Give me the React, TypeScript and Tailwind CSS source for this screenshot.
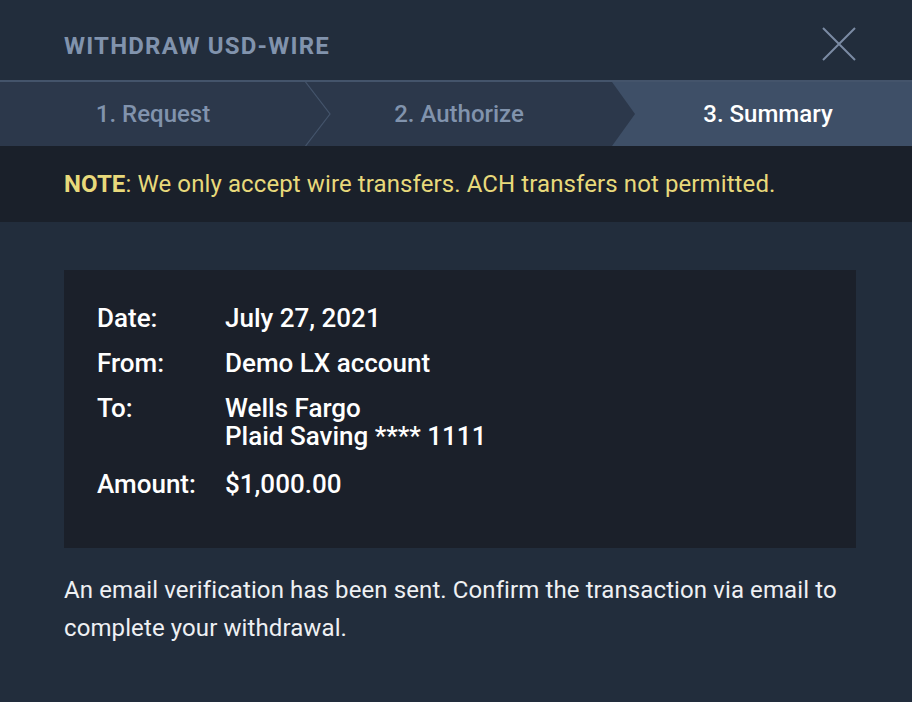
import React from "react";

const steps = [
  { label: "1. Request", state: "done" },
  { label: "2. Authorize", state: "done" },
  { label: "3. Summary", state: "active" },
];

const rows = [
  { label: "Date:", value: ["July 27, 2021"] },
  { label: "From:", value: ["Demo LX account"] },
  { label: "To:", value: ["Wells Fargo", "Plaid Saving **** 1111"] },
  { label: "Amount:", value: ["$1,000.00"] },
];

const App = () => {
  return (
    <div
      className="w-[912px] h-[702px] bg-[#222d3c] flex flex-col"
      style={{ fontFamily: "Roboto, 'Liberation Sans', sans-serif" }}
    >
      {/* header */}
      <div className="h-[80px] flex items-center justify-between pl-[64px] pr-[56px]">
        <h1 className="text-[24px] font-bold text-[#8193ad] tracking-[1.2px] pt-[11px]">
          WITHDRAW USD-WIRE
        </h1>
        <svg width="34" height="34" viewBox="0 0 34 34" className="mt-[8px]">
          <path d="M1 1 L33 33 M33 1 L1 33" stroke="#7b8ba4" strokeWidth="2" />
        </svg>
      </div>

      {/* steps */}
      <div className="border-t-2 border-[#44546b] h-[66px] flex">
        {steps.map((step, i) => (
          <div
            key={step.label}
            className={
              step.state === "active"
                ? "relative flex-1 flex items-center justify-center bg-[#3e4f67] text-white pl-[12px]"
                : "relative w-[306px] flex items-center justify-center bg-[#2c384b] text-[#8193ad]"
            }
          >
            {i === 0 && (
              <svg width="27" height="64" viewBox="0 0 27 64" className="absolute right-[-26px] top-0 z-10">
                <path d="M0.5 0 L25 32 L0.5 64" stroke="#44546b" strokeWidth="1.2" fill="none" />
              </svg>
            )}
            {step.state === "active" && (
              <svg width="24" height="64" viewBox="0 0 24 64" className="absolute left-0 top-0">
                <path d="M0 0 L23 32 L0 64 Z" fill="#2c384b" />
              </svg>
            )}
            <span className="text-[24px] font-medium">{step.label}</span>
          </div>
        ))}
      </div>

      {/* note */}
      <div className="h-[76px] bg-[#1a202a] flex items-center px-[64px]">
        <p className="text-[24px] text-[#e8d97b] tracking-[0.1px]">
          <span className="font-bold">NOTE</span>: We only accept wire transfers. ACH transfers not
          permitted.
        </p>
      </div>

      {/* body */}
      <div className="pl-[64px] pr-[56px] pt-[48px]">
        <div className="bg-[#1b202a] h-[278px] pl-[33px] pt-[34px] flex flex-col gap-[17px]">
          {rows.map((row, i) => (
            <div
              key={row.label}
              className={
                i === rows.length - 1
                  ? "flex text-[26px] font-medium text-white leading-[28px] pt-[3px]"
                  : "flex text-[26px] font-medium text-white leading-[28px]"
              }
            >
              <div className="w-[128px]">{row.label}</div>
              <div>
                {row.value.map((v) => (
                  <div key={v}>{v}</div>
                ))}
              </div>
            </div>
          ))}
        </div>
        <p className="mt-[23px] text-[24px] leading-[38px] text-[#eef0f3] tracking-[0.1px]">
          An email verification has been sent. Confirm the transaction via email to complete your
          withdrawal.
        </p>
      </div>
    </div>
  );
};

export default App;
